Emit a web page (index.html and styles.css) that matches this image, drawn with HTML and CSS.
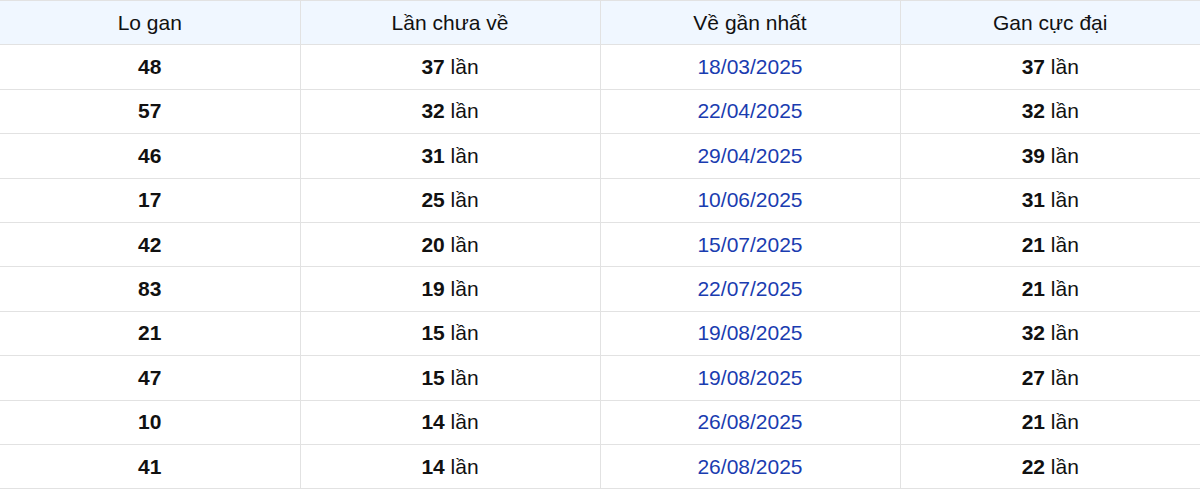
FILE: index.html
```html
<!DOCTYPE html>
<html>
<head>
<meta charset="utf-8">
<link rel="stylesheet" href="styles.css">
</head>
<body>
<table class="gan-table">
  <thead>
    <tr><th>Lo gan</th><th>Lần chưa về</th><th>Về gần nhất</th><th>Gan cực đại</th></tr>
  </thead>
  <tbody>
    <tr><td class="num">48</td><td><b>37</b> lần</td><td class="date">18/03/2025</td><td><b>37</b> lần</td></tr>
    <tr><td class="num">57</td><td><b>32</b> lần</td><td class="date">22/04/2025</td><td><b>32</b> lần</td></tr>
    <tr><td class="num">46</td><td><b>31</b> lần</td><td class="date">29/04/2025</td><td><b>39</b> lần</td></tr>
    <tr><td class="num">17</td><td><b>25</b> lần</td><td class="date">10/06/2025</td><td><b>31</b> lần</td></tr>
    <tr><td class="num">42</td><td><b>20</b> lần</td><td class="date">15/07/2025</td><td><b>21</b> lần</td></tr>
    <tr><td class="num">83</td><td><b>19</b> lần</td><td class="date">22/07/2025</td><td><b>21</b> lần</td></tr>
    <tr><td class="num">21</td><td><b>15</b> lần</td><td class="date">19/08/2025</td><td><b>32</b> lần</td></tr>
    <tr><td class="num">47</td><td><b>15</b> lần</td><td class="date">19/08/2025</td><td><b>27</b> lần</td></tr>
    <tr><td class="num">10</td><td><b>14</b> lần</td><td class="date">26/08/2025</td><td><b>21</b> lần</td></tr>
    <tr><td class="num">41</td><td><b>14</b> lần</td><td class="date">26/08/2025</td><td><b>22</b> lần</td></tr>
  </tbody>
</table>
</body>
</html>
```
FILE: styles.css
```css
html, body {
  margin: 0;
  padding: 0;
  background: #ffffff;
}
body {
  font-family: "Liberation Sans", Arial, sans-serif;
  color: #111111;
}
.gan-table {
  width: 1200px;
  border-collapse: collapse;
  table-layout: fixed;
  font-size: 21px;
}
.gan-table th,
.gan-table td {
  border: 1px solid #e2e2e2;
  text-align: center;
  padding: 0;
  height: 43.4px;
  line-height: 24px;
}
.gan-table th {
  background: #f0f7ff;
  font-weight: 400;
}
.gan-table tr > :first-child { border-left: none; }
.gan-table tr > :last-child { border-right: none; }
.gan-table .num { font-weight: 700; }
.gan-table b { font-weight: 700; }
.gan-table .date { color: #1a3cb0; }
```
